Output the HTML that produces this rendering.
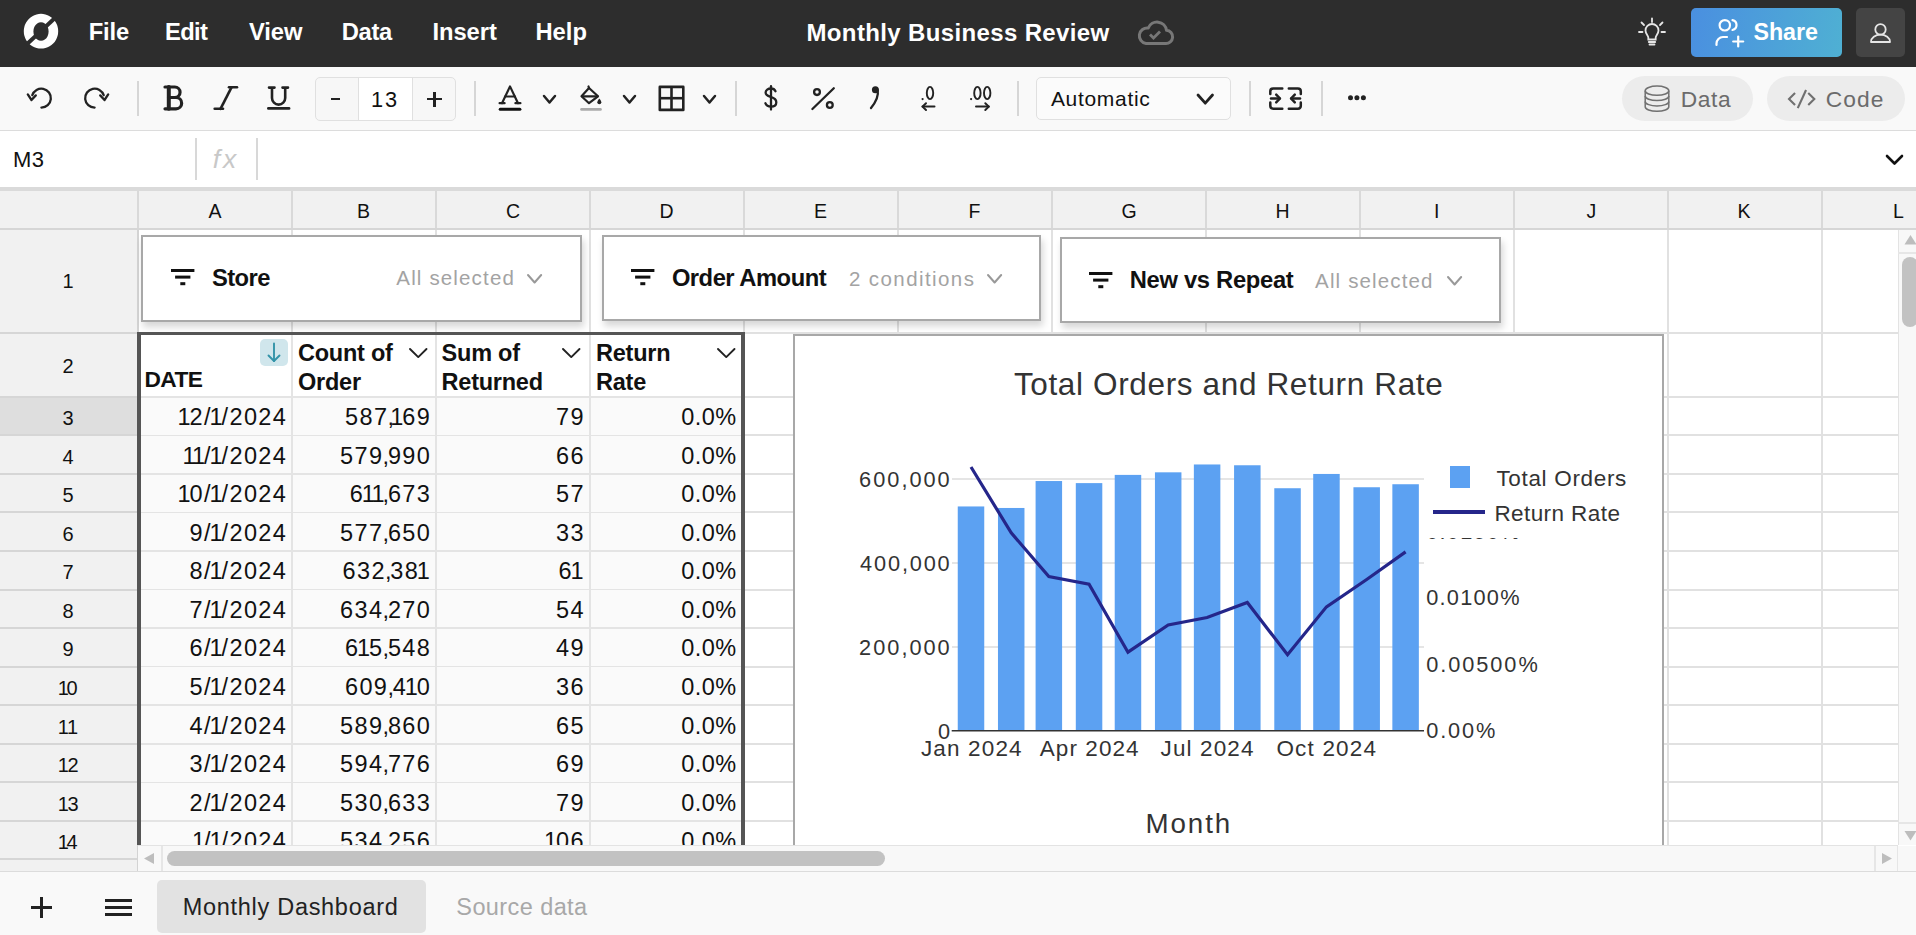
<!DOCTYPE html>
<html><head><meta charset="utf-8"><title>Monthly Business Review</title>
<style>
*{margin:0;padding:0;box-sizing:border-box}
html,body{width:1916px;height:935px;overflow:hidden;background:#fff;font-family:"Liberation Sans",sans-serif}
.a{position:absolute}
.t{position:absolute;white-space:nowrap}
svg{position:absolute;overflow:visible}
</style></head><body>
<div class="a" style="left:0px;top:0px;width:1916px;height:67px;background:#2d2d2d;"></div>
<svg class="a" style="left:23px;top:13px" width="36" height="36" viewBox="0 0 36 36">
<path fill="#fff" fill-rule="evenodd" d="M18 0.8 A17.2 17.4 0 1 1 17.99 0.8 Z M18 9.2 A7.6 9.3 0 1 0 18.01 9.2 Z"/>
<line x1="3" y1="32" x2="33" y2="4" stroke="#2d2d2d" stroke-width="4"/>
</svg>
<div class="t" style="left:88.70px;top:20.10px;font-size:23.75px;line-height:23.75px;font-weight:700;color:#fff;letter-spacing:-0.100px;">File</div>
<div class="t" style="left:165.00px;top:20.10px;font-size:23.75px;line-height:23.75px;font-weight:700;color:#fff;letter-spacing:-0.633px;">Edit</div>
<div class="t" style="left:248.90px;top:20.10px;font-size:23.75px;line-height:23.75px;font-weight:700;color:#fff;letter-spacing:-0.067px;">View</div>
<div class="t" style="left:341.80px;top:20.10px;font-size:23.75px;line-height:23.75px;font-weight:700;color:#fff;letter-spacing:-0.367px;">Data</div>
<div class="t" style="left:432.40px;top:20.10px;font-size:23.75px;line-height:23.75px;font-weight:700;color:#fff;letter-spacing:-0.040px;">Insert</div>
<div class="t" style="left:535.40px;top:20.10px;font-size:23.75px;line-height:23.75px;font-weight:700;color:#fff;letter-spacing:0.033px;">Help</div>
<div class="t" style="left:806.50px;top:20.60px;font-size:24.0px;line-height:24.0px;font-weight:700;color:#fff;letter-spacing:0.359px;">Monthly Business Review</div>
<svg class="a" style="left:1136px;top:19px" width="40" height="30" viewBox="0 0 40 30">
<path d="M10 24.5 H29.5 A6.5 6.5 0 0 0 30.5 11.3 A9.5 9.5 0 0 0 12.3 9 A7.8 7.8 0 0 0 10 24.5 Z" fill="none" stroke="#777" stroke-width="3" stroke-linejoin="round"/>
<path d="M14 15.5 L17.5 19 L24 12.5" fill="none" stroke="#777" stroke-width="2.8" stroke-linecap="butt" stroke-linejoin="miter"/>
</svg>
<svg class="a" style="left:1636px;top:16px" width="32" height="32" viewBox="0 0 32 32">
<g fill="none" stroke="#e6e6e6" stroke-width="1.8" stroke-linecap="round">
<line x1="16" y1="2.5" x2="16" y2="6"/><line x1="5.5" y1="6.5" x2="8" y2="9"/><line x1="26.5" y1="6.5" x2="24" y2="9"/>
<line x1="3" y1="16" x2="6.5" y2="16"/><line x1="25.5" y1="16" x2="29" y2="16"/>
<path d="M12.3 23.5 V21.5 C12.3 19.5 9.5 18 9.5 14.5 A6.5 6.5 0 0 1 22.5 14.5 C22.5 18 19.7 19.5 19.7 21.5 V23.5 Z"/>
<line x1="12.8" y1="26" x2="19.2" y2="26"/><line x1="13.5" y1="28.5" x2="18.5" y2="28.5"/>
</g></svg>
<div class="a" style="left:1691px;top:8px;width:151px;height:49px;border-radius:5px;background:linear-gradient(100deg,#4a8fe0 0%,#4fb0d3 100%)"></div>
<svg class="a" style="left:1713px;top:17px" width="34" height="32" viewBox="0 0 34 32">
<g fill="none" stroke="#fff" stroke-width="2.2" stroke-linecap="round">
<circle cx="11.8" cy="8.3" r="5.2"/>
<path d="M19.5 3.2 A5 5 0 0 1 19.5 13"/>
<path d="M3.5 28 V26.5 A6.5 6.5 0 0 1 10 20 H14"/>
<line x1="25.2" y1="19.5" x2="25.2" y2="29.5"/><line x1="20.2" y1="24.5" x2="30.2" y2="24.5"/>
</g></svg>
<div class="t" style="left:1753.40px;top:20.90px;font-size:23.25px;line-height:23.25px;font-weight:700;color:#fff;">Share</div>
<div class="a" style="left:1856px;top:8px;width:49px;height:49px;border-radius:5px;background:#444"></div>
<svg class="a" style="left:1868px;top:20px" width="25" height="25" viewBox="0 0 25 25">
<g fill="none" stroke="#e6e6e6" stroke-width="1.8">
<circle cx="12.5" cy="9.4" r="5.2"/>
<path d="M3 22 A9.5 7.3 0 0 1 22 22 Z" stroke-linejoin="round"/>
</g></svg>
<div class="a" style="left:0px;top:67px;width:1916px;height:63px;background:#f9f9f9;"></div>
<div class="a" style="left:0px;top:130px;width:1916px;height:1px;background:#dcdcdc;"></div>
<svg class="a" style="left:26px;top:85px" width="28" height="26" viewBox="0 0 28 26"><g fill="none" stroke="#222" stroke-width="2.3" stroke-linecap="round" stroke-linejoin="round"><path d="M6.3 10.2 A9.5 9.5 0 1 1 15.4 22.6"/><path d="M1.8 9.4 L5.5 15 L9.8 10.4"/></g></svg>
<svg class="a" style="left:82px;top:85px" width="28" height="26" viewBox="0 0 28 26"><g fill="none" stroke="#222" stroke-width="2.3" stroke-linecap="round" stroke-linejoin="round"><path d="M21.7 10.2 A9.5 9.5 0 1 0 12.6 22.6"/><path d="M26.2 9.4 L22.5 15 L18.2 10.4"/></g></svg>
<div class="a" style="left:137px;top:81px;width:1.5px;height:35px;background:#d6d6d6;"></div>
<svg class="a" style="left:163px;top:85px" width="24" height="27" viewBox="0 0 24 27"><g fill="none" stroke="#222" stroke-linecap="round" stroke-linejoin="round"><path d="M2 2 H11.8 A5.25 5.25 0 0 1 11.8 12.5 H5.5 M5.5 12.5 H13 A5.65 5.65 0 0 1 13 23.8 H2" stroke-width="3.2"/><line x1="5.8" y1="2" x2="5.8" y2="23.8" stroke-width="4"/></g></svg>
<svg class="a" style="left:212px;top:84px" width="28" height="28" viewBox="0 0 28 28"><g fill="none" stroke="#222" stroke-width="2.6" stroke-linecap="round"><line x1="17" y1="3.3" x2="25" y2="3.3"/><line x1="2.7" y1="24.8" x2="11" y2="24.8"/><line x1="19.5" y1="3.3" x2="8.5" y2="24.8"/></g></svg>
<svg class="a" style="left:265px;top:84px" width="28" height="28" viewBox="0 0 28 28"><g fill="none" stroke="#222" stroke-width="2.6" stroke-linecap="round"><path d="M4 3.6 H9.5 M17.5 3.6 H23 M7 3.6 V14 A6.6 6.6 0 0 0 20.2 14 V3.6"/><line x1="3.4" y1="24.4" x2="24" y2="24.4" stroke-width="2.8"/></g></svg>
<div class="a" style="left:314.5px;top:76.5px;width:141px;height:44px;border:1.3px solid #e0e0e0;border-radius:5px;background:#f7f7f7"></div>
<div class="a" style="left:357.5px;top:77.5px;width:55px;height:42px;background:#fff;border-left:1.3px solid #e0e0e0;border-right:1.3px solid #e0e0e0;"></div>
<div class="a" style="left:331px;top:97.5px;width:9px;height:2.4px;background:#222;"></div>
<div class="t" style="left:371.00px;top:89.00px;font-size:21.75px;line-height:21.75px;font-weight:400;color:#111;letter-spacing:2.000px;">13</div>
<div class="a" style="left:427px;top:98px;width:15px;height:2.4px;background:#222;"></div>
<div class="a" style="left:433.3px;top:91.5px;width:2.4px;height:15px;background:#222;"></div>
<div class="a" style="left:474px;top:81px;width:1.5px;height:35px;background:#d6d6d6;"></div>
<svg class="a" style="left:496px;top:84px" width="28" height="28" viewBox="0 0 28 28"><g fill="none" stroke="#222" stroke-width="2.2" stroke-linecap="round" stroke-linejoin="round"><path d="M6 19.2 L14 2.4 L22 19.2"/><line x1="9" y1="12.5" x2="19" y2="12.5"/><line x1="3.6" y1="19.2" x2="8.6" y2="19.2"/><line x1="19.4" y1="19.2" x2="24.4" y2="19.2"/></g><line x1="4.2" y1="25.3" x2="23.9" y2="25.3" stroke="#111" stroke-width="3" stroke-linecap="round"/></svg>
<svg class="a" style="left:541.5px;top:94px" width="15" height="10.5" viewBox="0 0 15 10.5"><path d="M2 2 L7.5 8.5 L13 2" fill="none" stroke="#222" stroke-width="2.5" stroke-linecap="round" stroke-linejoin="round"/></svg>
<svg class="a" style="left:578px;top:84px" width="28" height="28" viewBox="0 0 28 28"><g fill="none" stroke="#222" stroke-width="2.2" stroke-linejoin="round" stroke-linecap="round"><path d="M11 4 L20 12.3 L11 19.2 L3.5 12.3 Z"/><line x1="4" y1="12.3" x2="19.5" y2="12.3"/><line x1="11" y1="4" x2="10.5" y2="2.5"/></g><path d="M21.3 14.6 C21.3 14.6 23.3 17 23.3 18.2 A2 2 0 0 1 19.3 18.2 C19.3 17 21.3 14.6 21.3 14.6Z" fill="#222"/><line x1="3.5" y1="25.4" x2="22.5" y2="25.4" stroke="#aaa" stroke-width="2.6" stroke-linecap="round"/></svg>
<svg class="a" style="left:621.5px;top:94px" width="15" height="10.5" viewBox="0 0 15 10.5"><path d="M2 2 L7.5 8.5 L13 2" fill="none" stroke="#222" stroke-width="2.5" stroke-linecap="round" stroke-linejoin="round"/></svg>
<svg class="a" style="left:657px;top:84px" width="28" height="28" viewBox="0 0 28 28"><g fill="none" stroke="#222" stroke-width="2.6" stroke-linejoin="round"><rect x="2.8" y="2.9" width="23.5" height="23"/><line x1="14.5" y1="2.9" x2="14.5" y2="25.9"/><line x1="2.8" y1="14.2" x2="26.3" y2="14.2"/></g></svg>
<svg class="a" style="left:702.3px;top:94px" width="15" height="10.5" viewBox="0 0 15 10.5"><path d="M2 2 L7.5 8.5 L13 2" fill="none" stroke="#222" stroke-width="2.5" stroke-linecap="round" stroke-linejoin="round"/></svg>
<div class="a" style="left:735px;top:81px;width:1.5px;height:35px;background:#d6d6d6;"></div>
<svg class="a" style="left:760px;top:84px" width="22" height="28" viewBox="0 0 22 28"><g fill="none" stroke="#222" stroke-width="2.3" stroke-linecap="round"><path d="M15.5 7.2 C14.5 5 12.8 4.5 11 4.5 C8 4.5 5.6 6 5.6 8.6 C5.6 14.3 16.3 11.5 16.3 18.2 C16.3 21 14 22.6 11 22.6 C8.3 22.6 6.3 21.4 5.4 19.3"/><line x1="11" y1="2.2" x2="11" y2="25.6"/></g></svg>
<svg class="a" style="left:809px;top:84px" width="28" height="28" viewBox="0 0 28 28"><g fill="none" stroke="#222" stroke-width="2.3" stroke-linecap="round"><circle cx="8" cy="8.1" r="2.9"/><circle cx="20.8" cy="21" r="2.9"/><line x1="24.8" y1="4.2" x2="3.4" y2="25"/></g></svg>
<svg class="a" style="left:865px;top:84px" width="18" height="28" viewBox="0 0 18 28"><circle cx="10.4" cy="5.8" r="3.5" fill="#222"/><path d="M12.7 6.5 C13.6 11 12 16.5 6 24" fill="none" stroke="#222" stroke-width="2.3" stroke-linecap="round"/></svg>
<svg class="a" style="left:919px;top:84px" width="20" height="30" viewBox="0 0 20 30"><circle cx="3.6" cy="15.1" r="1.1" fill="#222"/><ellipse cx="11" cy="9" rx="3.2" ry="6.1" fill="none" stroke="#222" stroke-width="1.9"/><g fill="none" stroke="#222" stroke-width="2" stroke-linecap="round" stroke-linejoin="round"><line x1="3.5" y1="22.6" x2="15.5" y2="22.6"/><path d="M7 19.2 L3.5 22.6 L7 26"/></g></svg>
<svg class="a" style="left:967px;top:84px" width="28" height="30" viewBox="0 0 28 30"><circle cx="4.1" cy="15.1" r="1.1" fill="#222"/><ellipse cx="10.4" cy="9" rx="3.2" ry="6.1" fill="none" stroke="#222" stroke-width="1.9"/><ellipse cx="20.2" cy="9" rx="3.2" ry="6.1" fill="none" stroke="#222" stroke-width="1.9"/><g fill="none" stroke="#222" stroke-width="2" stroke-linecap="round" stroke-linejoin="round"><line x1="9" y1="22.6" x2="21.8" y2="22.6"/><path d="M18.3 19.2 L21.8 22.6 L18.3 26"/></g></svg>
<div class="a" style="left:1017px;top:81px;width:1.5px;height:35px;background:#d6d6d6;"></div>
<div class="a" style="left:1035.5px;top:77px;width:195px;height:43px;border:1.3px solid #e0e0e0;border-radius:5px;background:#fbfbfb"></div>
<div class="t" style="left:1050.90px;top:88.10px;font-size:21.0px;line-height:21.0px;font-weight:400;color:#111;letter-spacing:0.688px;">Automatic</div>
<svg class="a" style="left:1196px;top:93px" width="18.5" height="12.2" viewBox="0 0 18.5 12.2"><path d="M2 2 L9.25 10.2 L16.5 2" fill="none" stroke="#222" stroke-width="2.8" stroke-linecap="round" stroke-linejoin="round"/></svg>
<div class="a" style="left:1249px;top:81px;width:1.5px;height:35px;background:#d6d6d6;"></div>
<svg class="a" style="left:1266px;top:84px" width="40" height="30" viewBox="0 0 40 30"><g fill="none" stroke="#222" stroke-width="2.5" stroke-linecap="round" stroke-linejoin="round"><path d="M4.3 10 V7.3 Q4.3 4.4 7.2 4.4 H16.3 M4.3 18.4 V21.8 Q4.3 24.7 7.2 24.7 H16.3 M34.8 10 V7.3 Q34.8 4.4 31.9 4.4 H22.8 M34.8 18.4 V21.8 Q34.8 24.7 31.9 24.7 H22.8"/><line x1="5" y1="14.5" x2="13.6" y2="14.5"/><path d="M10.2 10.6 L14 14.5 L10.2 18.4"/><line x1="34" y1="14.5" x2="25.4" y2="14.5"/><path d="M28.8 10.6 L25 14.5 L28.8 18.4"/></g></svg>
<div class="a" style="left:1321px;top:81px;width:1.5px;height:35px;background:#d6d6d6;"></div>
<svg class="a" style="left:1346px;top:94px" width="22" height="8" viewBox="0 0 22 8"><circle cx="4.5" cy="3.8" r="2.5" fill="#222"/><circle cx="10.9" cy="3.8" r="2.5" fill="#222"/><circle cx="17.4" cy="3.8" r="2.5" fill="#222"/></svg>
<div class="a" style="left:1622px;top:76px;width:131px;height:45px;border-radius:23px;background:#ececec"></div>
<svg class="a" style="left:1643px;top:84px" width="28" height="30" viewBox="0 0 28 30"><g fill="none" stroke="#707070" stroke-width="1.5"><ellipse cx="14" cy="6.7" rx="11.8" ry="4.6"/><path d="M2.2 6.7 V22.7 A11.8 4.6 0 0 0 25.8 22.7 V6.7"/><path d="M2.2 12 A11.8 4.6 0 0 0 25.8 12 M2.2 17.4 A11.8 4.6 0 0 0 25.8 17.4"/></g></svg>
<div class="t" style="left:1680.70px;top:87.80px;font-size:22.75px;line-height:22.75px;font-weight:400;color:#6b6b6b;letter-spacing:0.667px;">Data</div>
<div class="a" style="left:1767px;top:76px;width:138px;height:45px;border-radius:23px;background:#ececec"></div>
<svg class="a" style="left:1786px;top:86px" width="32" height="26" viewBox="0 0 32 26"><g fill="none" stroke="#707070" stroke-width="2.1" stroke-linecap="square" stroke-linejoin="miter"><path d="M8.3 7.8 L3 13 L8.3 18.2 M23 7.8 L28.3 13 L23 18.2"/><line x1="19.6" y1="5" x2="12.2" y2="21.2"/></g></svg>
<div class="t" style="left:1825.80px;top:87.80px;font-size:22.75px;line-height:22.75px;font-weight:400;color:#6b6b6b;letter-spacing:1.067px;">Code</div>
<div class="a" style="left:0px;top:131.5px;width:1916px;height:55.5px;background:#fff;"></div>
<div class="t" style="left:12.90px;top:149.10px;font-size:22.0px;line-height:22.0px;font-weight:400;color:#111;letter-spacing:0.500px;">M3</div>
<div class="a" style="left:195px;top:138px;width:2px;height:42px;background:#d8d8d8;"></div>
<div class="t" style="left:212.70px;top:146.00px;font-size:26.5px;line-height:26.5px;font-weight:400;color:#c8c8c8;font-style:italic;letter-spacing:3.000px;">fx</div>
<div class="a" style="left:256px;top:138px;width:2px;height:42px;background:#d8d8d8;"></div>
<svg class="a" style="left:1884.5px;top:153.5px" width="19" height="11.5" viewBox="0 0 19 11.5"><path d="M2 2 L9.5 9.5 L17 2" fill="none" stroke="#111" stroke-width="2.6" stroke-linecap="round" stroke-linejoin="round"/></svg>
<div class="a" style="left:0px;top:187px;width:1916px;height:3.5px;background:#dadada;"></div>
<div class="a" style="left:138px;top:230px;width:1760px;height:615px;background:#fff;"></div>
<div class="a" style="left:0px;top:190.5px;width:1916px;height:37.5px;background:#f1f1f1;"></div>
<div class="a" style="left:0px;top:227.5px;width:1916px;height:2.5px;background:#d6d6d6;"></div>
<div class="a" style="left:137px;top:190.5px;width:2px;height:37px;background:#d9d9d9;"></div>
<div class="t" style="left:208.50px;top:202.00px;font-size:19.5px;line-height:19.5px;font-weight:400;color:#111;">A</div>
<div class="a" style="left:291px;top:190.5px;width:2px;height:37px;background:#d9d9d9;"></div>
<div class="t" style="left:357.00px;top:202.00px;font-size:19.5px;line-height:19.5px;font-weight:400;color:#111;">B</div>
<div class="a" style="left:435px;top:190.5px;width:2px;height:37px;background:#d9d9d9;"></div>
<div class="t" style="left:506.00px;top:202.00px;font-size:19.5px;line-height:19.5px;font-weight:400;color:#111;">C</div>
<div class="a" style="left:589px;top:190.5px;width:2px;height:37px;background:#d9d9d9;"></div>
<div class="t" style="left:659.50px;top:202.00px;font-size:19.5px;line-height:19.5px;font-weight:400;color:#111;">D</div>
<div class="a" style="left:743px;top:190.5px;width:2px;height:37px;background:#d9d9d9;"></div>
<div class="t" style="left:814.00px;top:202.00px;font-size:19.5px;line-height:19.5px;font-weight:400;color:#111;">E</div>
<div class="a" style="left:897px;top:190.5px;width:2px;height:37px;background:#d9d9d9;"></div>
<div class="t" style="left:968.50px;top:202.00px;font-size:19.5px;line-height:19.5px;font-weight:400;color:#111;">F</div>
<div class="a" style="left:1051px;top:190.5px;width:2px;height:37px;background:#d9d9d9;"></div>
<div class="t" style="left:1121.50px;top:202.00px;font-size:19.5px;line-height:19.5px;font-weight:400;color:#111;">G</div>
<div class="a" style="left:1205px;top:190.5px;width:2px;height:37px;background:#d9d9d9;"></div>
<div class="t" style="left:1275.50px;top:202.00px;font-size:19.5px;line-height:19.5px;font-weight:400;color:#111;">H</div>
<div class="a" style="left:1359px;top:190.5px;width:2px;height:37px;background:#d9d9d9;"></div>
<div class="t" style="left:1434.00px;top:202.00px;font-size:19.5px;line-height:19.5px;font-weight:400;color:#111;">I</div>
<div class="a" style="left:1513px;top:190.5px;width:2px;height:37px;background:#d9d9d9;"></div>
<div class="t" style="left:1586.50px;top:202.00px;font-size:19.5px;line-height:19.5px;font-weight:400;color:#111;">J</div>
<div class="a" style="left:1667px;top:190.5px;width:2px;height:37px;background:#d9d9d9;"></div>
<div class="t" style="left:1737.50px;top:202.00px;font-size:19.5px;line-height:19.5px;font-weight:400;color:#111;">K</div>
<div class="a" style="left:1821px;top:190.5px;width:2px;height:37px;background:#d9d9d9;"></div>
<div class="t" style="left:1893.00px;top:202.00px;font-size:19.5px;line-height:19.5px;font-weight:400;color:#111;">L</div>
<div class="a" style="left:0px;top:230px;width:137px;height:641px;background:#f1f1f1;"></div>
<div class="a" style="left:0px;top:396.8px;width:137px;height:38.55px;background:#dedede;"></div>
<div class="a" style="left:137px;top:230px;width:2px;height:641px;background:#d3d3d3;"></div>
<div class="a" style="left:0px;top:331.8px;width:137px;height:2px;background:#d6d6d6;"></div>
<div class="a" style="left:0px;top:395.8px;width:137px;height:2px;background:#d6d6d6;"></div>
<div class="a" style="left:0px;top:434.35px;width:137px;height:2px;background:#d6d6d6;"></div>
<div class="a" style="left:0px;top:472.9px;width:137px;height:2px;background:#d6d6d6;"></div>
<div class="a" style="left:0px;top:511.45000000000005px;width:137px;height:2px;background:#d6d6d6;"></div>
<div class="a" style="left:0px;top:550.0px;width:137px;height:2px;background:#d6d6d6;"></div>
<div class="a" style="left:0px;top:588.55px;width:137px;height:2px;background:#d6d6d6;"></div>
<div class="a" style="left:0px;top:627.1px;width:137px;height:2px;background:#d6d6d6;"></div>
<div class="a" style="left:0px;top:665.65px;width:137px;height:2px;background:#d6d6d6;"></div>
<div class="a" style="left:0px;top:704.2px;width:137px;height:2px;background:#d6d6d6;"></div>
<div class="a" style="left:0px;top:742.75px;width:137px;height:2px;background:#d6d6d6;"></div>
<div class="a" style="left:0px;top:781.3px;width:137px;height:2px;background:#d6d6d6;"></div>
<div class="a" style="left:0px;top:819.8499999999999px;width:137px;height:2px;background:#d6d6d6;"></div>
<div class="a" style="left:0px;top:858.4px;width:137px;height:2px;background:#d6d6d6;"></div>
<div class="t" style="left:62.50px;top:271.20px;font-size:20.0px;line-height:20.0px;font-weight:400;color:#111;">1</div>
<div class="t" style="left:62.50px;top:355.80px;font-size:20.0px;line-height:20.0px;font-weight:400;color:#111;">2</div>
<div class="t" style="left:62.50px;top:408.10px;font-size:20.0px;line-height:20.0px;font-weight:400;color:#111;">3</div>
<div class="t" style="left:62.50px;top:446.65px;font-size:20.0px;line-height:20.0px;font-weight:400;color:#111;">4</div>
<div class="t" style="left:62.50px;top:485.20px;font-size:20.0px;line-height:20.0px;font-weight:400;color:#111;">5</div>
<div class="t" style="left:62.50px;top:523.75px;font-size:20.0px;line-height:20.0px;font-weight:400;color:#111;">6</div>
<div class="t" style="left:62.50px;top:562.30px;font-size:20.0px;line-height:20.0px;font-weight:400;color:#111;">7</div>
<div class="t" style="left:62.50px;top:600.85px;font-size:20.0px;line-height:20.0px;font-weight:400;color:#111;">8</div>
<div class="t" style="left:62.50px;top:639.40px;font-size:20.0px;line-height:20.0px;font-weight:400;color:#111;">9</div>
<div class="t" style="left:57.70px;top:677.95px;font-size:20.0px;line-height:20.0px;font-weight:400;color:#111;letter-spacing:-2.400px;">10</div>
<div class="t" style="left:57.70px;top:716.50px;font-size:20.0px;line-height:20.0px;font-weight:400;color:#111;letter-spacing:-0.400px;">11</div>
<div class="t" style="left:57.70px;top:755.05px;font-size:20.0px;line-height:20.0px;font-weight:400;color:#111;letter-spacing:-1.400px;">12</div>
<div class="t" style="left:57.70px;top:793.60px;font-size:20.0px;line-height:20.0px;font-weight:400;color:#111;letter-spacing:-1.400px;">13</div>
<div class="t" style="left:57.70px;top:832.15px;font-size:20.0px;line-height:20.0px;font-weight:400;color:#111;letter-spacing:-2.400px;">14</div>
<div class="a" style="left:291px;top:230px;width:2px;height:615px;background:#e1e1e1;"></div>
<div class="a" style="left:435px;top:230px;width:2px;height:615px;background:#e1e1e1;"></div>
<div class="a" style="left:589px;top:230px;width:2px;height:615px;background:#e1e1e1;"></div>
<div class="a" style="left:743px;top:230px;width:2px;height:615px;background:#e1e1e1;"></div>
<div class="a" style="left:897px;top:230px;width:2px;height:615px;background:#e1e1e1;"></div>
<div class="a" style="left:1051px;top:230px;width:2px;height:615px;background:#e1e1e1;"></div>
<div class="a" style="left:1205px;top:230px;width:2px;height:615px;background:#e1e1e1;"></div>
<div class="a" style="left:1359px;top:230px;width:2px;height:615px;background:#e1e1e1;"></div>
<div class="a" style="left:1513px;top:230px;width:2px;height:615px;background:#e1e1e1;"></div>
<div class="a" style="left:1667px;top:230px;width:2px;height:615px;background:#e1e1e1;"></div>
<div class="a" style="left:1821px;top:230px;width:2px;height:615px;background:#e1e1e1;"></div>
<div class="a" style="left:139px;top:331.8px;width:1759px;height:2px;background:#e1e1e1;"></div>
<div class="a" style="left:139px;top:395.8px;width:1759px;height:2px;background:#e1e1e1;"></div>
<div class="a" style="left:139px;top:434.35px;width:1759px;height:2px;background:#e1e1e1;"></div>
<div class="a" style="left:139px;top:472.9px;width:1759px;height:2px;background:#e1e1e1;"></div>
<div class="a" style="left:139px;top:511.45000000000005px;width:1759px;height:2px;background:#e1e1e1;"></div>
<div class="a" style="left:139px;top:550.0px;width:1759px;height:2px;background:#e1e1e1;"></div>
<div class="a" style="left:139px;top:588.55px;width:1759px;height:2px;background:#e1e1e1;"></div>
<div class="a" style="left:139px;top:627.1px;width:1759px;height:2px;background:#e1e1e1;"></div>
<div class="a" style="left:139px;top:665.65px;width:1759px;height:2px;background:#e1e1e1;"></div>
<div class="a" style="left:139px;top:704.2px;width:1759px;height:2px;background:#e1e1e1;"></div>
<div class="a" style="left:139px;top:742.75px;width:1759px;height:2px;background:#e1e1e1;"></div>
<div class="a" style="left:139px;top:781.3px;width:1759px;height:2px;background:#e1e1e1;"></div>
<div class="a" style="left:139px;top:819.8499999999999px;width:1759px;height:2px;background:#e1e1e1;"></div>
<div class="a" style="left:141.2px;top:234.6px;width:440.50000000000006px;height:87.1px;background:#fff;border:2px solid #a8a8a8;box-shadow:2px 5px 7px rgba(0,0,0,0.16)"></div>
<svg class="a" style="left:170.7px;top:269.3px" width="24" height="17" viewBox="0 0 24 17"><rect x="0" y="0" width="23.4" height="3" fill="#111"/><rect x="4.1" y="6.6" width="15.3" height="3" fill="#111"/><rect x="9.3" y="13.2" width="5" height="3" fill="#111"/></svg>
<div class="t" style="left:211.90px;top:266.40px;font-size:23.75px;line-height:23.75px;font-weight:700;color:#111;letter-spacing:-0.525px;">Store</div>
<div class="t" style="left:396.30px;top:268.00px;font-size:20.5px;line-height:20.5px;font-weight:400;color:#a3a3a3;letter-spacing:1.155px;">All selected</div>
<svg class="a" style="left:526.4px;top:272.5px" width="17.2" height="11.5" viewBox="0 0 17.2 11.5"><path d="M2 2 L8.6 9.5 L15.2 2" fill="none" stroke="#999" stroke-width="2" stroke-linecap="round" stroke-linejoin="round"/></svg>
<div class="a" style="left:601.5px;top:234.6px;width:439.5px;height:86.4px;background:#fff;border:2px solid #a8a8a8;box-shadow:2px 5px 7px rgba(0,0,0,0.16)"></div>
<svg class="a" style="left:630.8px;top:269.4px" width="24" height="17" viewBox="0 0 24 17"><rect x="0" y="0" width="23.4" height="3" fill="#111"/><rect x="4.1" y="6.6" width="15.3" height="3" fill="#111"/><rect x="9.3" y="13.2" width="5" height="3" fill="#111"/></svg>
<div class="t" style="left:671.90px;top:266.20px;font-size:23.75px;line-height:23.75px;font-weight:700;color:#111;letter-spacing:-0.491px;">Order Amount</div>
<div class="t" style="left:848.90px;top:268.50px;font-size:20.5px;line-height:20.5px;font-weight:400;color:#a3a3a3;letter-spacing:1.418px;">2 conditions</div>
<svg class="a" style="left:986.1px;top:272.5px" width="17.2" height="11.5" viewBox="0 0 17.2 11.5"><path d="M2 2 L8.6 9.5 L15.2 2" fill="none" stroke="#999" stroke-width="2" stroke-linecap="round" stroke-linejoin="round"/></svg>
<div class="a" style="left:1059.5px;top:236.8px;width:441.0px;height:86.19999999999999px;background:#fff;border:2px solid #a8a8a8;box-shadow:2px 5px 7px rgba(0,0,0,0.16)"></div>
<svg class="a" style="left:1088.7px;top:271.7px" width="24" height="17" viewBox="0 0 24 17"><rect x="0" y="0" width="23.4" height="3" fill="#111"/><rect x="4.1" y="6.6" width="15.3" height="3" fill="#111"/><rect x="9.3" y="13.2" width="5" height="3" fill="#111"/></svg>
<div class="t" style="left:1129.70px;top:268.00px;font-size:23.75px;line-height:23.75px;font-weight:700;color:#111;letter-spacing:-0.300px;">New vs Repeat</div>
<div class="t" style="left:1315.10px;top:270.60px;font-size:20.5px;line-height:20.5px;font-weight:400;color:#a3a3a3;letter-spacing:1.145px;">All selected</div>
<svg class="a" style="left:1446px;top:274.5px" width="17.2" height="11.5" viewBox="0 0 17.2 11.5"><path d="M2 2 L8.6 9.5 L15.2 2" fill="none" stroke="#999" stroke-width="2" stroke-linecap="round" stroke-linejoin="round"/></svg>
<div class="a" style="left:140.5px;top:335px;width:601px;height:62px;background:#fff;"></div>
<div class="a" style="left:140.5px;top:397px;width:601px;height:448px;background:#fafafa;"></div>
<div class="a" style="left:291.25px;top:335px;width:1.5px;height:510px;background:#e4e4e4;"></div>
<div class="a" style="left:435.25px;top:335px;width:1.5px;height:510px;background:#e4e4e4;"></div>
<div class="a" style="left:589.25px;top:335px;width:1.5px;height:510px;background:#e4e4e4;"></div>
<div class="a" style="left:140.5px;top:396.05px;width:601px;height:1.5px;background:#e4e4e4;"></div>
<div class="a" style="left:140.5px;top:434.6px;width:601px;height:1.5px;background:#e4e4e4;"></div>
<div class="a" style="left:140.5px;top:473.15px;width:601px;height:1.5px;background:#e4e4e4;"></div>
<div class="a" style="left:140.5px;top:511.70000000000005px;width:601px;height:1.5px;background:#e4e4e4;"></div>
<div class="a" style="left:140.5px;top:550.25px;width:601px;height:1.5px;background:#e4e4e4;"></div>
<div class="a" style="left:140.5px;top:588.8px;width:601px;height:1.5px;background:#e4e4e4;"></div>
<div class="a" style="left:140.5px;top:627.35px;width:601px;height:1.5px;background:#e4e4e4;"></div>
<div class="a" style="left:140.5px;top:665.9px;width:601px;height:1.5px;background:#e4e4e4;"></div>
<div class="a" style="left:140.5px;top:704.45px;width:601px;height:1.5px;background:#e4e4e4;"></div>
<div class="a" style="left:140.5px;top:743.0px;width:601px;height:1.5px;background:#e4e4e4;"></div>
<div class="a" style="left:140.5px;top:781.55px;width:601px;height:1.5px;background:#e4e4e4;"></div>
<div class="a" style="left:140.5px;top:820.0999999999999px;width:601px;height:1.5px;background:#e4e4e4;"></div>
<div class="a" style="left:140.5px;top:858.65px;width:601px;height:1.5px;background:#e4e4e4;"></div>
<div class="a" style="left:137.3px;top:332px;width:607.5px;height:3px;background:#555;"></div>
<div class="a" style="left:137.3px;top:332px;width:3.4px;height:513px;background:#555;"></div>
<div class="a" style="left:741.3px;top:332px;width:3.5px;height:513px;background:#555;"></div>
<div class="t" style="left:144.40px;top:368.00px;font-size:22.75px;line-height:22.75px;font-weight:700;color:#111;letter-spacing:-0.567px;">DATE</div>
<div class="a" style="left:260.3px;top:338.9px;width:27.3px;height:27.5px;border-radius:5px;background:#d0e6ec"></div>
<svg class="a" style="left:264px;top:341px" width="20" height="24" viewBox="0 0 20 24"><g fill="none" stroke="#3293a8" stroke-width="1.9" stroke-linecap="round" stroke-linejoin="round"><line x1="10" y1="2.5" x2="10" y2="20"/><path d="M4.5 14.5 L10 20 L15.5 14.5"/></g></svg>
<div class="t" style="left:298.00px;top:341.70px;font-size:23.5px;line-height:23.5px;font-weight:700;color:#111;letter-spacing:-0.243px;">Count of</div>
<div class="t" style="left:298.00px;top:370.90px;font-size:23.5px;line-height:23.5px;font-weight:700;color:#111;letter-spacing:-0.243px;">Order</div>
<div class="t" style="left:441.60px;top:341.70px;font-size:23.5px;line-height:23.5px;font-weight:700;color:#111;letter-spacing:-0.243px;">Sum of</div>
<div class="t" style="left:441.60px;top:370.90px;font-size:23.5px;line-height:23.5px;font-weight:700;color:#111;letter-spacing:-0.243px;">Returned</div>
<div class="t" style="left:596.00px;top:341.70px;font-size:23.5px;line-height:23.5px;font-weight:700;color:#111;letter-spacing:-0.243px;">Return</div>
<div class="t" style="left:596.00px;top:370.90px;font-size:23.5px;line-height:23.5px;font-weight:700;color:#111;letter-spacing:-0.243px;">Rate</div>
<svg class="a" style="left:407.5px;top:346.6px" width="20.5" height="12.1" viewBox="0 0 20.5 12.1"><path d="M2 2 L10.25 10.1 L18.5 2" fill="none" stroke="#222" stroke-width="1.9" stroke-linecap="round" stroke-linejoin="round"/></svg>
<svg class="a" style="left:561px;top:346.6px" width="20.5" height="12.1" viewBox="0 0 20.5 12.1"><path d="M2 2 L10.25 10.1 L18.5 2" fill="none" stroke="#222" stroke-width="1.9" stroke-linecap="round" stroke-linejoin="round"/></svg>
<svg class="a" style="left:715.8px;top:346.6px" width="20.5" height="12.1" viewBox="0 0 20.5 12.1"><path d="M2 2 L10.25 10.1 L18.5 2" fill="none" stroke="#222" stroke-width="1.9" stroke-linecap="round" stroke-linejoin="round"/></svg>
<div class="a" style="left:0;top:0;width:1916px;height:845px;overflow:hidden"><div class="t" style="right:1628.70px;top:406.10px;font-size:23.5px;line-height:23.5px;letter-spacing:1.4px;color:#111;text-align:right"><span style="letter-spacing:-1.05px">1</span>2<span style="letter-spacing:-1.05px">/</span><span style="letter-spacing:-1.05px">1</span>/2024</div><div class="t" style="right:1484.70px;top:406.10px;font-size:23.5px;line-height:23.5px;letter-spacing:1.4px;color:#111;text-align:right">58<span style="letter-spacing:0.52px">7</span><span style="letter-spacing:-3.68px">,</span><span style="letter-spacing:-1.05px">1</span>69</div><div class="t" style="right:1331.00px;top:406.10px;font-size:23.5px;line-height:23.5px;letter-spacing:1.4px;color:#111;text-align:right">79</div><div class="t" style="right:1179.30px;top:406.10px;font-size:23.5px;line-height:23.5px;letter-spacing:0.5px;color:#111;text-align:right">0.0%</div><div class="t" style="right:1628.70px;top:444.65px;font-size:23.5px;line-height:23.5px;letter-spacing:1.4px;color:#111;text-align:right"><span style="letter-spacing:-3.50px">1</span><span style="letter-spacing:-1.05px">1</span><span style="letter-spacing:-1.05px">/</span><span style="letter-spacing:-1.05px">1</span>/2024</div><div class="t" style="right:1484.70px;top:444.65px;font-size:23.5px;line-height:23.5px;letter-spacing:1.4px;color:#111;text-align:right">57<span style="letter-spacing:0.52px">9</span><span style="letter-spacing:-1.23px">,</span>990</div><div class="t" style="right:1331.00px;top:444.65px;font-size:23.5px;line-height:23.5px;letter-spacing:1.4px;color:#111;text-align:right">66</div><div class="t" style="right:1179.30px;top:444.65px;font-size:23.5px;line-height:23.5px;letter-spacing:0.5px;color:#111;text-align:right">0.0%</div><div class="t" style="right:1628.70px;top:483.20px;font-size:23.5px;line-height:23.5px;letter-spacing:1.4px;color:#111;text-align:right"><span style="letter-spacing:-1.05px">1</span>0<span style="letter-spacing:-1.05px">/</span><span style="letter-spacing:-1.05px">1</span>/2024</div><div class="t" style="right:1484.70px;top:483.20px;font-size:23.5px;line-height:23.5px;letter-spacing:1.4px;color:#111;text-align:right"><span style="letter-spacing:-1.05px">6</span><span style="letter-spacing:-3.50px">1</span><span style="letter-spacing:-1.93px">1</span><span style="letter-spacing:-1.23px">,</span>673</div><div class="t" style="right:1331.00px;top:483.20px;font-size:23.5px;line-height:23.5px;letter-spacing:1.4px;color:#111;text-align:right">57</div><div class="t" style="right:1179.30px;top:483.20px;font-size:23.5px;line-height:23.5px;letter-spacing:0.5px;color:#111;text-align:right">0.0%</div><div class="t" style="right:1628.70px;top:521.75px;font-size:23.5px;line-height:23.5px;letter-spacing:1.4px;color:#111;text-align:right">9<span style="letter-spacing:-1.05px">/</span><span style="letter-spacing:-1.05px">1</span>/2024</div><div class="t" style="right:1484.70px;top:521.75px;font-size:23.5px;line-height:23.5px;letter-spacing:1.4px;color:#111;text-align:right">57<span style="letter-spacing:0.52px">7</span><span style="letter-spacing:-1.23px">,</span>650</div><div class="t" style="right:1331.00px;top:521.75px;font-size:23.5px;line-height:23.5px;letter-spacing:1.4px;color:#111;text-align:right">33</div><div class="t" style="right:1179.30px;top:521.75px;font-size:23.5px;line-height:23.5px;letter-spacing:0.5px;color:#111;text-align:right">0.0%</div><div class="t" style="right:1628.70px;top:560.30px;font-size:23.5px;line-height:23.5px;letter-spacing:1.4px;color:#111;text-align:right">8<span style="letter-spacing:-1.05px">/</span><span style="letter-spacing:-1.05px">1</span>/2024</div><div class="t" style="right:1484.70px;top:560.30px;font-size:23.5px;line-height:23.5px;letter-spacing:1.4px;color:#111;text-align:right">63<span style="letter-spacing:0.52px">2</span><span style="letter-spacing:-1.23px">,</span>3<span style="letter-spacing:-1.05px">8</span>1</div><div class="t" style="right:1331.00px;top:560.30px;font-size:23.5px;line-height:23.5px;letter-spacing:1.4px;color:#111;text-align:right"><span style="letter-spacing:-1.05px">6</span>1</div><div class="t" style="right:1179.30px;top:560.30px;font-size:23.5px;line-height:23.5px;letter-spacing:0.5px;color:#111;text-align:right">0.0%</div><div class="t" style="right:1628.70px;top:598.85px;font-size:23.5px;line-height:23.5px;letter-spacing:1.4px;color:#111;text-align:right">7<span style="letter-spacing:-1.05px">/</span><span style="letter-spacing:-1.05px">1</span>/2024</div><div class="t" style="right:1484.70px;top:598.85px;font-size:23.5px;line-height:23.5px;letter-spacing:1.4px;color:#111;text-align:right">63<span style="letter-spacing:0.52px">4</span><span style="letter-spacing:-1.23px">,</span>270</div><div class="t" style="right:1331.00px;top:598.85px;font-size:23.5px;line-height:23.5px;letter-spacing:1.4px;color:#111;text-align:right">54</div><div class="t" style="right:1179.30px;top:598.85px;font-size:23.5px;line-height:23.5px;letter-spacing:0.5px;color:#111;text-align:right">0.0%</div><div class="t" style="right:1628.70px;top:637.40px;font-size:23.5px;line-height:23.5px;letter-spacing:1.4px;color:#111;text-align:right">6<span style="letter-spacing:-1.05px">/</span><span style="letter-spacing:-1.05px">1</span>/2024</div><div class="t" style="right:1484.70px;top:637.40px;font-size:23.5px;line-height:23.5px;letter-spacing:1.4px;color:#111;text-align:right"><span style="letter-spacing:-1.05px">6</span><span style="letter-spacing:-1.05px">1</span><span style="letter-spacing:0.52px">5</span><span style="letter-spacing:-1.23px">,</span>548</div><div class="t" style="right:1331.00px;top:637.40px;font-size:23.5px;line-height:23.5px;letter-spacing:1.4px;color:#111;text-align:right">49</div><div class="t" style="right:1179.30px;top:637.40px;font-size:23.5px;line-height:23.5px;letter-spacing:0.5px;color:#111;text-align:right">0.0%</div><div class="t" style="right:1628.70px;top:675.95px;font-size:23.5px;line-height:23.5px;letter-spacing:1.4px;color:#111;text-align:right">5<span style="letter-spacing:-1.05px">/</span><span style="letter-spacing:-1.05px">1</span>/2024</div><div class="t" style="right:1484.70px;top:675.95px;font-size:23.5px;line-height:23.5px;letter-spacing:1.4px;color:#111;text-align:right">60<span style="letter-spacing:0.52px">9</span><span style="letter-spacing:-1.23px">,</span><span style="letter-spacing:-1.05px">4</span><span style="letter-spacing:-1.05px">1</span>0</div><div class="t" style="right:1331.00px;top:675.95px;font-size:23.5px;line-height:23.5px;letter-spacing:1.4px;color:#111;text-align:right">36</div><div class="t" style="right:1179.30px;top:675.95px;font-size:23.5px;line-height:23.5px;letter-spacing:0.5px;color:#111;text-align:right">0.0%</div><div class="t" style="right:1628.70px;top:714.50px;font-size:23.5px;line-height:23.5px;letter-spacing:1.4px;color:#111;text-align:right">4<span style="letter-spacing:-1.05px">/</span><span style="letter-spacing:-1.05px">1</span>/2024</div><div class="t" style="right:1484.70px;top:714.50px;font-size:23.5px;line-height:23.5px;letter-spacing:1.4px;color:#111;text-align:right">58<span style="letter-spacing:0.52px">9</span><span style="letter-spacing:-1.23px">,</span>860</div><div class="t" style="right:1331.00px;top:714.50px;font-size:23.5px;line-height:23.5px;letter-spacing:1.4px;color:#111;text-align:right">65</div><div class="t" style="right:1179.30px;top:714.50px;font-size:23.5px;line-height:23.5px;letter-spacing:0.5px;color:#111;text-align:right">0.0%</div><div class="t" style="right:1628.70px;top:753.05px;font-size:23.5px;line-height:23.5px;letter-spacing:1.4px;color:#111;text-align:right">3<span style="letter-spacing:-1.05px">/</span><span style="letter-spacing:-1.05px">1</span>/2024</div><div class="t" style="right:1484.70px;top:753.05px;font-size:23.5px;line-height:23.5px;letter-spacing:1.4px;color:#111;text-align:right">59<span style="letter-spacing:0.52px">4</span><span style="letter-spacing:-1.23px">,</span>776</div><div class="t" style="right:1331.00px;top:753.05px;font-size:23.5px;line-height:23.5px;letter-spacing:1.4px;color:#111;text-align:right">69</div><div class="t" style="right:1179.30px;top:753.05px;font-size:23.5px;line-height:23.5px;letter-spacing:0.5px;color:#111;text-align:right">0.0%</div><div class="t" style="right:1628.70px;top:791.60px;font-size:23.5px;line-height:23.5px;letter-spacing:1.4px;color:#111;text-align:right">2<span style="letter-spacing:-1.05px">/</span><span style="letter-spacing:-1.05px">1</span>/2024</div><div class="t" style="right:1484.70px;top:791.60px;font-size:23.5px;line-height:23.5px;letter-spacing:1.4px;color:#111;text-align:right">53<span style="letter-spacing:0.52px">0</span><span style="letter-spacing:-1.23px">,</span>633</div><div class="t" style="right:1331.00px;top:791.60px;font-size:23.5px;line-height:23.5px;letter-spacing:1.4px;color:#111;text-align:right">79</div><div class="t" style="right:1179.30px;top:791.60px;font-size:23.5px;line-height:23.5px;letter-spacing:0.5px;color:#111;text-align:right">0.0%</div><div class="t" style="right:1628.70px;top:830.15px;font-size:23.5px;line-height:23.5px;letter-spacing:1.4px;color:#111;text-align:right"><span style="letter-spacing:-1.05px">1</span><span style="letter-spacing:-1.05px">/</span><span style="letter-spacing:-1.05px">1</span>/2024</div><div class="t" style="right:1484.70px;top:830.15px;font-size:23.5px;line-height:23.5px;letter-spacing:1.4px;color:#111;text-align:right">53<span style="letter-spacing:0.52px">4</span><span style="letter-spacing:-1.23px">,</span>256</div><div class="t" style="right:1331.00px;top:830.15px;font-size:23.5px;line-height:23.5px;letter-spacing:1.4px;color:#111;text-align:right"><span style="letter-spacing:-1.05px">1</span>06</div><div class="t" style="right:1179.30px;top:830.15px;font-size:23.5px;line-height:23.5px;letter-spacing:0.5px;color:#111;text-align:right">0.0%</div></div>
<div class="a" style="left:793px;top:334px;width:870.6px;height:530px;background:#fff;border:2px solid #a8a8a8"></div>
<div class="t" style="left:1013.90px;top:368.90px;font-size:31.5px;line-height:31.5px;font-weight:400;color:#333;letter-spacing:0.644px;">Total Orders and Return Rate</div>
<div class="a" style="left:951.7px;top:646.0px;width:472.3px;height:1.5px;background:#e5e5e5;"></div>
<div class="a" style="left:951.7px;top:562.0500000000001px;width:472.3px;height:1.5px;background:#e5e5e5;"></div>
<div class="a" style="left:951.7px;top:478.1px;width:472.3px;height:1.5px;background:#e5e5e5;"></div>
<svg class="a" style="left:0;top:0" width="1916" height="935" viewBox="0 0 1916 935"><rect x="957.75" y="506.45" width="26.5" height="224.25" fill="#5ca1f2"/><rect x="997.97" y="507.97" width="26.5" height="222.73" fill="#5ca1f2"/><rect x="1035.59" y="481.04" width="26.5" height="249.66" fill="#5ca1f2"/><rect x="1075.80" y="483.11" width="26.5" height="247.59" fill="#5ca1f2"/><rect x="1114.72" y="474.90" width="26.5" height="255.80" fill="#5ca1f2"/><rect x="1154.94" y="472.32" width="26.5" height="258.38" fill="#5ca1f2"/><rect x="1193.86" y="464.47" width="26.5" height="266.23" fill="#5ca1f2"/><rect x="1234.07" y="465.26" width="26.5" height="265.44" fill="#5ca1f2"/><rect x="1274.29" y="488.23" width="26.5" height="242.47" fill="#5ca1f2"/><rect x="1313.21" y="473.95" width="26.5" height="256.75" fill="#5ca1f2"/><rect x="1353.43" y="487.25" width="26.5" height="243.45" fill="#5ca1f2"/><rect x="1392.35" y="484.24" width="26.5" height="246.46" fill="#5ca1f2"/><line x1="951.7" y1="730.7" x2="1424" y2="730.7" stroke="#333" stroke-width="1.6"/><polyline points="971.00,467.02 1011.22,532.84 1048.84,576.52 1089.05,584.25 1127.97,652.19 1168.19,624.91 1207.11,617.55 1247.32,602.50 1287.54,654.78 1326.46,606.85 1366.68,579.47 1405.60,551.89" fill="none" stroke="#25268a" stroke-width="3.2" stroke-linejoin="miter"/></svg>
<div class="t" style="left:938.10px;top:720.50px;font-size:21.75px;line-height:21.75px;font-weight:400;color:#333;">0</div>
<div class="t" style="left:859.10px;top:636.55px;font-size:21.75px;line-height:21.75px;font-weight:400;color:#333;letter-spacing:2.000px;">200,000</div>
<div class="t" style="left:860.10px;top:552.60px;font-size:21.75px;line-height:21.75px;font-weight:400;color:#333;letter-spacing:1.833px;">400,000</div>
<div class="t" style="left:859.10px;top:468.65px;font-size:21.75px;line-height:21.75px;font-weight:400;color:#333;letter-spacing:2.000px;">600,000</div>
<div class="t" style="left:1426.20px;top:720.30px;font-size:21.75px;line-height:21.75px;font-weight:400;color:#333;letter-spacing:1.875px;">0.00%</div>
<div class="t" style="left:1426.20px;top:653.85px;font-size:21.75px;line-height:21.75px;font-weight:400;color:#333;letter-spacing:1.943px;">0.00500%</div>
<div class="t" style="left:1426.20px;top:587.40px;font-size:21.75px;line-height:21.75px;font-weight:400;color:#333;letter-spacing:1.250px;">0.0100%</div>
<div class="t" style="left:1426.20px;top:520.95px;font-size:21.75px;line-height:21.75px;font-weight:400;color:#333;letter-spacing:1.250px;">0.0150%</div>
<div class="t" style="left:920.90px;top:737.70px;font-size:22.5px;line-height:22.5px;font-weight:400;color:#333;letter-spacing:1.157px;">Jan 2024</div>
<div class="t" style="left:1039.70px;top:737.70px;font-size:22.5px;line-height:22.5px;font-weight:400;color:#333;letter-spacing:1.086px;">Apr 2024</div>
<div class="t" style="left:1160.60px;top:737.70px;font-size:22.5px;line-height:22.5px;font-weight:400;color:#333;letter-spacing:1.114px;">Jul 2024</div>
<div class="t" style="left:1276.40px;top:737.70px;font-size:22.5px;line-height:22.5px;font-weight:400;color:#333;letter-spacing:1.186px;">Oct 2024</div>
<div class="t" style="left:1145.60px;top:809.90px;font-size:27.75px;line-height:27.75px;font-weight:400;color:#333;letter-spacing:1.850px;">Month</div>
<div class="a" style="left:1424.5px;top:458px;width:208px;height:80px;background:#fff;"></div>
<div class="a" style="left:1449.5px;top:466.4px;width:20.5px;height:21.6px;background:#5ca1f2;"></div>
<div class="t" style="left:1496.40px;top:467.50px;font-size:22.5px;line-height:22.5px;font-weight:400;color:#333;letter-spacing:0.673px;">Total Orders</div>
<div class="a" style="left:1433px;top:510.4px;width:52.4px;height:3.2px;background:#25268a;"></div>
<div class="t" style="left:1494.40px;top:503.00px;font-size:22.5px;line-height:22.5px;font-weight:400;color:#333;letter-spacing:0.420px;">Return Rate</div>
<div class="a" style="left:1897.5px;top:230px;width:18.5px;height:615px;background:#f8f8f8;border-left:1.5px solid #e3e3e3;"></div>
<div class="a" style="left:1898px;top:252px;width:18px;height:1.5px;background:#e6e6e6;"></div>
<svg class="a" style="left:1903.5px;top:234px" width="17" height="12" viewBox="0 0 17 12"><path d="M6.5 1 L12.5 10.5 L0.5 10.5 Z" fill="#bdbdbd"/></svg>
<div class="a" style="left:1902px;top:257px;width:16px;height:70px;background:#c2c2c2;border-radius:8px;"></div>
<div class="a" style="left:1898px;top:822px;width:18px;height:1.5px;background:#e6e6e6;"></div>
<svg class="a" style="left:1903.5px;top:829.5px" width="17" height="12" viewBox="0 0 17 12"><path d="M0.5 1 L12.5 1 L6.5 10.5 Z" fill="#bdbdbd"/></svg>
<div class="a" style="left:138px;top:845px;width:1760px;height:26px;background:#f8f8f8;border-top:1.5px solid #e3e3e3;"></div>
<div class="a" style="left:161px;top:846px;width:1.5px;height:25px;background:#e6e6e6;"></div>
<svg class="a" style="left:143px;top:852px" width="14" height="14" viewBox="0 0 14 14"><path d="M1 6.5 L11 1 L11 12 Z" fill="#bdbdbd"/></svg>
<div class="a" style="left:167px;top:851px;width:718px;height:15.2px;background:#c2c2c2;border-radius:8px;"></div>
<div class="a" style="left:1874px;top:846px;width:1.5px;height:25px;background:#e6e6e6;"></div>
<div class="a" style="left:1897px;top:846px;width:19px;height:25px;background:#f8f8f8;border-left:1.5px solid #e6e6e6;"></div>
<svg class="a" style="left:1880px;top:852px" width="14" height="14" viewBox="0 0 14 14"><path d="M12 6.5 L2 1 L2 12 Z" fill="#bdbdbd"/></svg>
<div class="a" style="left:0px;top:870.5px;width:1916px;height:64.5px;background:#f9f9f9;border-top:1.5px solid #dcdcdc;"></div>
<div class="a" style="left:31px;top:905.5px;width:21px;height:3px;background:#222;"></div>
<div class="a" style="left:40px;top:897px;width:3px;height:21px;background:#222;"></div>
<div class="a" style="left:105px;top:899px;width:27px;height:3px;background:#222;"></div>
<div class="a" style="left:105px;top:906px;width:27px;height:3px;background:#222;"></div>
<div class="a" style="left:105px;top:913px;width:27px;height:3px;background:#222;"></div>
<div class="a" style="left:157px;top:879.7px;width:268.6px;height:53px;background:#e2e2e2;border-radius:5px;"></div>
<div class="t" style="left:182.80px;top:896.40px;font-size:23.5px;line-height:23.5px;font-weight:400;color:#222;letter-spacing:0.700px;">Monthly Dashboard</div>
<div class="t" style="left:456.30px;top:896.40px;font-size:23.5px;line-height:23.5px;font-weight:400;color:#a8a8a8;letter-spacing:0.410px;">Source data</div>

</body></html>
